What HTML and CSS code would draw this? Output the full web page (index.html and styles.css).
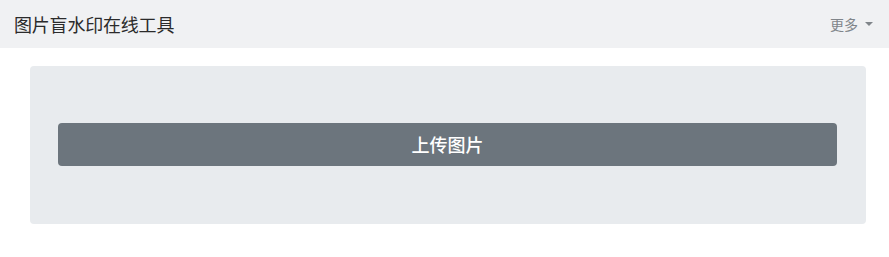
FILE: index.html
```html
<!DOCTYPE html>
<html lang="zh">
<head>
<meta charset="utf-8">
<title>图片盲水印在线工具</title>
<link rel="stylesheet" href="styles.css">
</head>
<body>
<nav class="navbar">
  <span class="brand">图片盲水印在线工具</span>
  <span class="more">更多<span class="caret"></span></span>
</nav>
<main class="main">
  <section class="jumbotron">
    <button class="btn">上传图片</button>
  </section>
</main>
</body>
</html>
```
FILE: styles.css
```css
* { box-sizing: border-box; }
html, body { margin: 0; padding: 0; }
body {
  font-family: "Noto Sans CJK SC", "Noto Sans", sans-serif;
  background: #fff;
  color: #212529;
}
.navbar {
  height: 48px;
  background: #f0f1f3;
  display: flex;
  align-items: center;
  justify-content: space-between;
  padding: 0 14px;
}
.brand {
  font-size: 18px;
  color: #2b2b2b;
  line-height: 1;
  letter-spacing: -0.2px;
}
.more {
  font-size: 14px;
  color: #80858a;
  display: flex;
  align-items: center;
  margin-right: 2px;
}
.caret {
  display: inline-block;
  width: 0;
  height: 0;
  margin-left: 7px;
  border-left: 4px solid transparent;
  border-right: 4px solid transparent;
  border-top: 4px solid #80858a;
}
.main {
  padding: 18px 23px 0 30px;
}
.jumbotron {
  background: #e8ebee;
  border-radius: 4px;
  padding: 57px 29px 58px 28px;
}
.btn {
  display: block;
  width: 100%;
  height: 43px;
  border: 0;
  border-radius: 4px;
  background: #6c757d;
  color: #fff;
  font-family: inherit;
  font-size: 18px;
  font-weight: 500;
  line-height: 43px;
  padding: 0;
  cursor: pointer;
}
```
